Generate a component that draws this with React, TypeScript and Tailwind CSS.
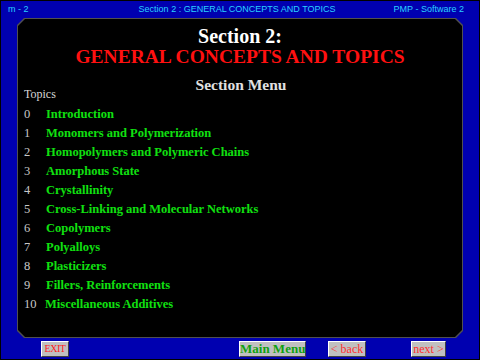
const topics = [
  'Introduction',
  'Monomers and Polymerization',
  'Homopolymers and Polymeric Chains',
  'Amorphous State',
  'Crystallinity',
  'Cross-Linking and Molecular Networks',
  'Copolymers',
  'Polyalloys',
  'Plasticizers',
  'Fillers, Reinforcements',
  'Miscellaneous Additives',
];

const chamfer = '[clip-path:polygon(7px_0,calc(100%-7px)_0,100%_7px,100%_calc(100%-7px),calc(100%-7px)_100%,7px_100%,0_calc(100%-7px),0_7px)]';

const NavButton = ({ label, className }: { label: string; className: string }) => (
  <button
    className={`h-[16px] p-0 whitespace-nowrap bg-[#c0c0c0] border border-t-white border-l-white border-r-[#404040] border-b-[#404040] leading-none font-['Liberation_Serif',serif] ${className}`}
  >
    {label}
  </button>
);

export default function App() {
  return (
    <div className="w-[480px] h-[360px] bg-[#0000b0] border border-black flex flex-col overflow-hidden">
      <div className="h-[17px] flex items-center justify-between pl-[7px] pr-[15px] text-[9px] text-[#2ad0ff] font-['Liberation_Sans',sans-serif] leading-none">
        <span>m - 2</span>
        <span className="ml-[52px]">Section 2 : GENERAL CONCEPTS AND TOPICS</span>
        <span>PMP - Software 2</span>
      </div>

      <div className={`mx-[16px] h-[320px] bg-[#505050] p-[1px] ${chamfer}`}>
        <div className={`h-full bg-black flex flex-col ${chamfer} font-['Liberation_Serif',serif]`}>
          <h1 className="text-center text-white font-bold text-[20px] leading-none mt-[7px]">Section 2:</h1>
          <h2 className="text-center text-[#ff1010] font-bold text-[19.5px] leading-none mt-[1px]">
            GENERAL CONCEPTS AND TOPICS
          </h2>
          <h3 className="text-center text-[#e0e0e0] font-bold text-[15.5px] leading-none mt-[10px] ml-[2px]">
            Section Menu
          </h3>
          <div className="text-[#d8d8d8] text-[12px] leading-none px-[6px] -mt-[4px]">Topics</div>
          <ul className="px-[6px] mt-[5px] flex flex-col">
            {topics.map((t, i) => (
              <li key={t} className="flex h-[19px] items-center text-[12.5px] leading-none">
                <span className="w-[22px] text-[#c8c8c8]">{i}</span>
                <span className={`text-[#10e010] font-bold ${i === 10 ? '-ml-[1px]' : ''}`}>{t}</span>
              </li>
            ))}
          </ul>
        </div>
      </div>

      <div className="flex-1">
        <div className="flex items-center h-full">
          <NavButton label="EXIT" className="ml-[40px] w-[28px] text-[10px] text-[#ff2020] tracking-[-0.5px]" />
          <NavButton label="Main Menu" className="ml-[170px] w-[67px] text-[13px] font-bold text-[#10a010]" />
          <NavButton label="< back" className="ml-[22px] w-[38px] text-[12px] text-[#ff3030]" />
          <NavButton label="next >" className="ml-[45px] w-[35px] text-[12px] text-[#ff3030]" />
        </div>
      </div>
    </div>
  );
}
